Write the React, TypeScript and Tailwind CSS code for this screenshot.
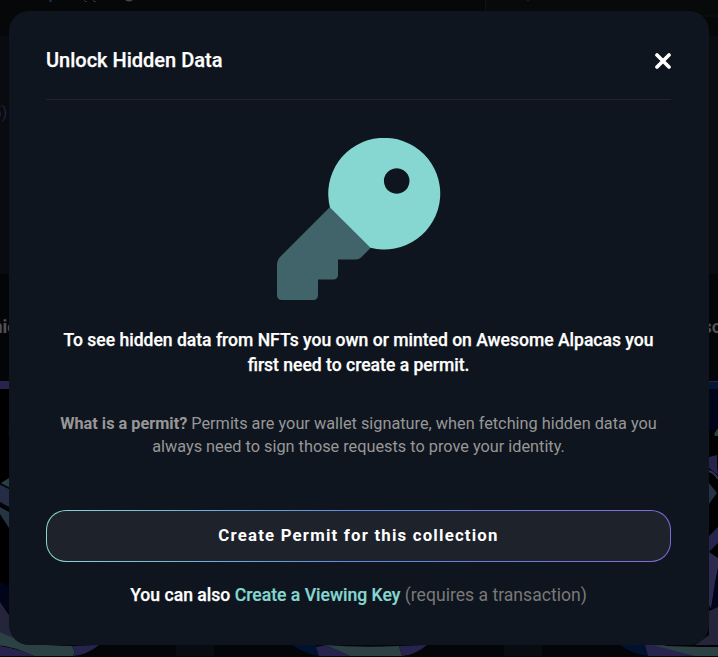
import React from "react";

function KeyIcon() {
  return (
    <svg width="164" height="164" viewBox="0 0 164 164" className="block">
      <path
        d="M53 69 L3.5 118.500 Q0 122 0 127 V157 Q0 162 5 162 H36 Q41 162 41 157 V141.500 H56 Q61 141.500 61 136.500 V121.500 H79 Q82 121.500 84 119.500 L95 108.500 Z"
        fill="#406469"
      />
      <path
        fillRule="evenodd"
        d="M53 69.500 A56 55.800 0 1 1 93.500 109.700 Z M119.700 30.200 a12.800 12.800 0 1 0 0.010 0 Z"
        fill="#86d6d1"
      />
    </svg>
  );
}

function CloseIcon() {
  return (
    <svg width="16" height="16" viewBox="0 0 16 16" className="block">
      <path d="M2 2 L14 14 M14 2 L2 14" stroke="#fff" strokeWidth="3.700" strokeLinecap="round" />
    </svg>
  );
}

/* Dimmed collection page behind the dialog */
function Backdrop() {
  return (
    <svg
      className="absolute inset-0"
      width="718"
      height="657"
      viewBox="0 0 718 657"
      fontFamily="Roboto, sans-serif"
    >
      <rect width="718" height="657" fill="#080b0f" />
      <rect width="718" height="36" fill="#050709" />
      <rect x="485.500" y="-20" width="260" height="36" rx="5" fill="#08090b" stroke="#101114" />
      <rect x="49" y="0" width="3" height="2" fill="#102843" />
      <path d="M84 0 l1 1.500 h2 M93 0 l1 1.500 h2" stroke="#333" fill="none" />
      <path d="M125 0 Q129 3 133 0 Z" fill="#444" />
      <rect x="527" y="0" width="2" height="1" fill="#24143a" />
      <text x="-8" y="118" fontSize="17" fill="#251c40">5)</text>
      <rect y="274" width="176" height="383" fill="#040508" />
      <rect x="214" y="274" width="290" height="383" fill="#040508" />
      <rect x="542" y="274" width="176" height="383" fill="#040508" />
      <text x="-7.500" y="333" fontSize="18" fontWeight="700" fill="#515152">nio</text>
      <text x="702.500" y="333" fontSize="18" fontWeight="700" fill="#515152">so</text>

      <rect y="389" width="9" height="268" fill="#000001" />
      <rect y="381" width="9" height="8" fill="#26244c" />
      <path d="M9 424 Q6 431 9 438Z" fill="#00051a" />
      <path d="M1 483 L9 478 V488Z" fill="#293d45" />
      <path d="M0 484 L9 489 V507 L0 502Z" fill="#252c45" />
      <path d="M0 507 L9 512 V528 L0 514Z" fill="#253443" />
      <path d="M0 484 L9 488 M0 503 L9 509" stroke="#05070b" strokeWidth="1.500" />
      <path d="M0 582 L9 586 V613 L0 602Z" fill="#00051a" />
      <path d="M0 602 Q12 620 25 637 L39 646 H0Z" fill="#24253a" />
      <path d="M0 632 Q25 646 72 646 Q76 652 73 656 H34 L17 649 L0 645Z" fill="#2c4143" />
      <path d="M0 646 Q20 649 34 656 H0Z" fill="#26244c" />
      <path d="M72 646 L99 645 Q87 655 73 656 Q76 651 72 646Z" fill="#26244c" />

      <path d="M292 645 H316 L319 656 Q305 654 292 645Z" fill="#00122f" />
      <path d="M316 647 L326 645 L350 656 H319Z" fill="#26244c" />
      <path d="M326 645 Q360 648 399 646 L402 656 H350Z" fill="#2c4143" />
      <path d="M399 646 L427 645 Q415 655 402 656Z" fill="#26244c" />
      <path d="M620 645 H645 L648 656 Q632 654 620 645Z" fill="#00122f" />

      <rect x="709" y="389" width="9" height="268" fill="#000002" />
      <rect x="709" y="381" width="9" height="8" fill="#061533" />
      <path d="M709 381.500 H718" stroke="#26244c" />
      <path d="M709 389 H718 V427 L709 432Z" fill="#00051a" />
      <path d="M714 434 L718 428 V436 H715Z" fill="#293d45" />
      <path d="M709 457 L717 455 V465 L718 475 L709 468Z" fill="#26244c" />
      <path d="M709 471 Q715 473 718 479" stroke="#333153" strokeWidth="2" fill="none" />
      <path d="M709 483 L717 493 L709 504Z" fill="#263147" />
      <path d="M718 527 L709 536 V552 L718 543Z" fill="#26244c" />
      <path d="M709 552 L718 558 V568 L711 609 L709 605Z" fill="#2c2a4f" />
      <path d="M715 582 L718 568 V607 L711 609Z" fill="#00051a" />
      <path d="M718 607 L709 611 V635 L695 645 H718Z" fill="#24253a" />
      <path d="M645 645 H664 L694 656 H648Z" fill="#26244c" />
      <path d="M653 645 Q680 647 718 647 V656 H694Z" fill="#2c4143" />
      <rect y="656" width="718" height="1" fill="#030405" />
    </svg>
  );
}

export default function App() {
  return (
    <div className="relative h-[657px] w-[718px] overflow-hidden bg-[#080b0f] px-[9px] pt-[11px] font-[Roboto,sans-serif]">
      <Backdrop />
      <section className="relative flex h-[634px] w-[700px] flex-col items-center rounded-[20px] bg-[#0f151e] pr-[38px] pl-[37px]">
        <header className="flex h-[89px] w-full items-center justify-between border-b border-[#20232f] pt-[11px]">
          <h1 className="pb-0.5 text-[20px] leading-6 font-medium text-white [-webkit-text-stroke:0.25px_white]">
            Unlock Hidden Data
          </h1>
          <button aria-label="Close">
            <CloseIcon />
          </button>
        </header>
        <div className="mt-[38px] self-start pl-[231px]">
          <KeyIcon />
        </div>
        <p className="mt-[26px] w-[610px] text-center text-[17.550px] leading-[25px] font-medium text-white [-webkit-text-stroke:0.25px_white]">
          To see hidden data from NFTs you own or minted on Awesome Alpacas you first need to create a permit.
        </p>
        <p className="mt-[34px] w-[610px] text-center text-[16.300px] leading-[23px] text-[#979797]">
          <strong className="font-bold">What is a permit?</strong> Permits are your wallet signature, when fetching
          hidden data you always need to sign those requests to prove your identity.
        </p>
        <button className="mt-[52px] h-[52px] w-full shrink-0 rounded-[20px] bg-linear-to-r from-[#86d6d1] via-[#5b8ae0] to-[#8069d8] p-px">
          <span className="flex h-full items-center justify-center rounded-[19px] bg-[#1e222b] text-[16.800px] font-bold tracking-[1.200px] text-white">
            Create Permit for this collection
          </span>
        </button>
        <p className="mt-[21px] text-[17.600px] leading-[25px] font-medium text-white">
          <span className="[-webkit-text-stroke:0.25px_white]">You can also</span>{" "}
          <span className="text-[#86d6d1] [-webkit-text-stroke:0.2px_#86d6d1]">Create a Viewing Key</span>{" "}
          <span className="font-normal text-[#797979]">(requires a transaction)</span>
        </p>
      </section>
    </div>
  );
}
